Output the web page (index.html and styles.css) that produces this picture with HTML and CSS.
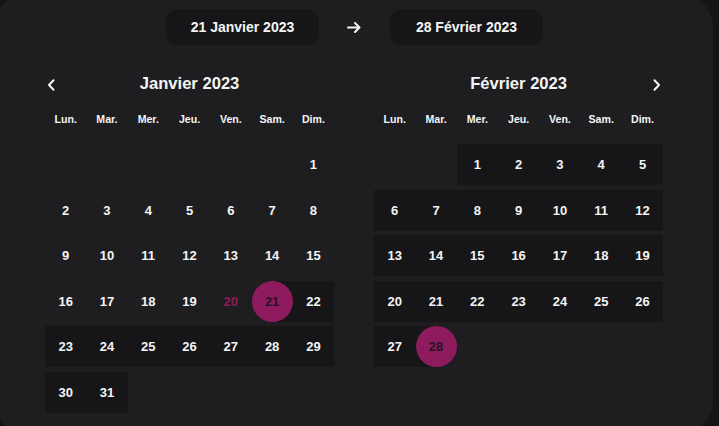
FILE: index.html
```html
<!DOCTYPE html>
<html lang="fr">
<head>
<meta charset="utf-8">
<title>Sélecteur de période</title>
<link rel="stylesheet" href="styles.css">
</head>
<body>
<div class="panel">
  <div class="content">
    <div class="range-bar">
      <div class="pill">21 Janvier 2023</div>
      <svg class="arrow" width="14" height="11" viewBox="0 0 14 11"><path d="M1 5.5H12.5M8 1L12.5 5.5L8 10" fill="none" stroke="#f4f4f5" stroke-width="2" stroke-linecap="round" stroke-linejoin="round"/></svg>
      <div class="pill pill-end">28 Février 2023</div>
    </div>
    <div class="months">
      <section class="month">
        <div class="month-head">
          <button class="nav nav-prev" aria-label="Mois précédent"><svg width="8" height="12" viewBox="0 0 8 12"><path d="M6.5 1.2L2 6L6.5 10.8" fill="none" stroke="#f4f4f5" stroke-width="2" stroke-linecap="round" stroke-linejoin="round"/></svg></button>
          <div class="title">Janvier 2023</div>
          <span></span>
        </div>
        <div class="grid">
          <div class="wd">Lun.</div><div class="wd">Mar.</div><div class="wd">Mer.</div><div class="wd">Jeu.</div><div class="wd">Ven.</div><div class="wd">Sam.</div><div class="wd">Dim.</div>
          <div></div><div></div><div></div><div></div><div></div><div></div>
          <div class="day">1</div>
          <div class="day">2</div><div class="day">3</div><div class="day">4</div><div class="day">5</div><div class="day">6</div><div class="day">7</div><div class="day">8</div>
          <div class="day">9</div><div class="day">10</div><div class="day">11</div><div class="day">12</div><div class="day">13</div><div class="day">14</div><div class="day">15</div>
          <div class="day">16</div><div class="day">17</div><div class="day">18</div><div class="day">19</div><div class="day hover">20</div><div class="day start"><span class="sel">21</span></div><div class="day in">22</div>
          <div class="day in">23</div><div class="day in">24</div><div class="day in">25</div><div class="day in">26</div><div class="day in">27</div><div class="day in">28</div><div class="day in">29</div>
          <div class="day in">30</div><div class="day in">31</div>
        </div>
      </section>
      <section class="month">
        <div class="month-head">
          <span></span>
          <div class="title">Février 2023</div>
          <button class="nav nav-next" aria-label="Mois suivant"><svg width="8" height="12" viewBox="0 0 8 12"><path d="M1.5 1.2L6 6L1.5 10.8" fill="none" stroke="#f4f4f5" stroke-width="2" stroke-linecap="round" stroke-linejoin="round"/></svg></button>
        </div>
        <div class="grid">
          <div class="wd">Lun.</div><div class="wd">Mar.</div><div class="wd">Mer.</div><div class="wd">Jeu.</div><div class="wd">Ven.</div><div class="wd">Sam.</div><div class="wd">Dim.</div>
          <div></div><div></div>
          <div class="day in">1</div><div class="day in">2</div><div class="day in">3</div><div class="day in">4</div><div class="day in">5</div>
          <div class="day in">6</div><div class="day in">7</div><div class="day in">8</div><div class="day in">9</div><div class="day in">10</div><div class="day in">11</div><div class="day in">12</div>
          <div class="day in">13</div><div class="day in">14</div><div class="day in">15</div><div class="day in">16</div><div class="day in">17</div><div class="day in">18</div><div class="day in">19</div>
          <div class="day in">20</div><div class="day in">21</div><div class="day in">22</div><div class="day in">23</div><div class="day in">24</div><div class="day in">25</div><div class="day in">26</div>
          <div class="day in">27</div><div class="day end"><span class="sel">28</span></div>
        </div>
      </section>
    </div>
  </div>
</div>
</body>
</html>
```
FILE: styles.css
```css
html, body {
  margin: 0;
  padding: 0;
  background: #151517;
  overflow: hidden;
}

body {
  width: 719px;
  height: 426px;
  font-family: "Liberation Sans", Arial, sans-serif;
  color: #f4f4f5;
}

.panel {
  margin: -4px 0 0 -6px;
  width: 719px;
  height: 436px;
  border-radius: 30px;
  background: #1e1e20;
  padding: 13px 0 0 51px;
  box-sizing: border-box;
}

.content {
  width: 619px;
}

.range-bar {
  display: flex;
  justify-content: center;
  align-items: center;
}

.pill {
  width: 153px;
  height: 36px;
  border-radius: 12px;
  background: #161618;
  display: flex;
  align-items: center;
  justify-content: center;
  font-size: 14px;
  font-weight: 700;
}

.arrow {
  display: block;
  margin: 0 28px 0 28px;
}

.pill-end {
  margin-left: 1px;
}

.months {
  display: flex;
  gap: 40px;
  margin-top: 27px;
}

.month-head {
  display: grid;
  grid-template-columns: 1fr auto 1fr;
  align-items: center;
  height: 24px;
}

.title {
  font-size: 16.6px;
  font-weight: 700;
  line-height: 24px;
}

.nav {
  display: flex;
  align-items: center;
  justify-content: center;
  padding: 0;
  border: 0;
  background: none;
  width: 8px;
  height: 12px;
  margin-top: 1px;
}

.nav-prev {
  justify-self: start;
  margin-left: 1.5px;
}

.nav-next {
  justify-self: end;
  margin-right: 2px;
}

.nav svg {
  display: block;
}

.grid {
  display: grid;
  grid-template-columns: repeat(7, 41.3px);
  grid-auto-rows: 41px;
  row-gap: 4.6px;
  margin-top: 2.5px;
}

.wd {
  display: flex;
  align-items: center;
  justify-content: center;
  font-size: 10.6px;
  font-weight: 700;
}

.day {
  display: flex;
  align-items: center;
  justify-content: center;
  font-size: 13px;
  font-weight: 700;
}

.day.in {
  background: #161618;
}

.day.start {
  background: linear-gradient(to right, transparent 50%, #161618 50%);
}

.day.end {
  background: linear-gradient(to right, #161618 50%, transparent 50%);
}

.day.hover {
  color: #8e1b5e;
}

.sel {
  width: 41px;
  height: 41px;
  border-radius: 50%;
  background: #8e1b5e;
  color: #2a1424;
  display: flex;
  align-items: center;
  justify-content: center;
}
```
